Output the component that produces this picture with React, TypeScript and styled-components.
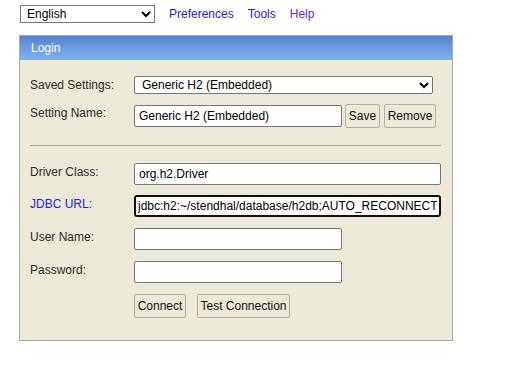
import React from 'react'
import styled, { createGlobalStyle } from 'styled-components'

const GlobalStyle = createGlobalStyle`
  html, body {
    margin: 0;
    padding: 0;
    background: #fff;
  }
  body {
    font-family: "Liberation Sans", Arial, sans-serif;
    font-size: 12px;
    color: #000;
  }
`

const Page = styled.div`
  padding: 5px 0 0 19px;
  width: 508px;
  height: 360px;
`

const TopBar = styled.div`
  display: flex;
  align-items: center;
  height: 18px;
  padding-left: 1px;
`

const LangSelect = styled.select`
  width: 135px;
  height: 18px;
  font-family: "Liberation Sans", Arial, sans-serif;
  font-size: 12px;
  border: 1px solid #767676;
  border-radius: 0;
  background: #fff;
  color: #000;
  padding: 0 0 0 2px;
  margin: 0 14px 0 0;
`

const NavLink = styled.a<{ $visited?: boolean }>`
  color: ${(p) => (p.$visited ? '#6a1fd8' : '#1a1aee')};
  text-decoration: none;
  margin-right: 14px;
  font-size: 12px;
`

const Panel = styled.div`
  margin-top: 12px;
  width: 432px;
  border: 1px solid #aca899;
  background: #ece9d8;
`

const PanelHead = styled.div`
  height: 24px;
  display: flex;
  align-items: center;
  padding-left: 11px;
  color: #fff;
  font-size: 12px;
  background: linear-gradient(to bottom, #5582cb 0%, #6b9ce0 50%, #7db1ee 100%);
`

const PanelBody = styled.div`
  padding: 16px 10px 22px 10px;
  display: flex;
  flex-direction: column;
`

const Row = styled.div<{ $gap?: number }>`
  display: flex;
  align-items: flex-start;
  margin-top: ${(p) => p.$gap ?? 0}px;
`

const Label = styled.div<{ $accent?: boolean; $pad?: number }>`
  width: 104px;
  flex: none;
  padding-top: ${(p) => p.$pad ?? 2}px;
  color: ${(p) => (p.$accent ? '#2323e6' : '#2b2b2b')};
  font-size: 12px;
`

const FieldSelect = styled.select`
  width: 299px;
  height: 18px;
  font-family: "Liberation Sans", Arial, sans-serif;
  font-size: 12px;
  border: 1px solid #767676;
  border-radius: 2px;
  background: #fff;
  color: #000;
  padding: 0 0 0 3px;
  margin: 0;
`

const Field = styled.input<{ $w: number; $drop?: boolean; $focus?: boolean }>`
  box-sizing: border-box;
  width: ${(p) => p.$w}px;
  height: 22px;
  margin: ${(p) => (p.$drop ? '1px 0 0 0' : '0')};
  padding: 0 ${(p) => (p.$focus ? 2 : 4)}px;
  font-family: "Liberation Sans", Arial, sans-serif;
  font-size: 12px;
  color: #000;
  background: #fff;
  border: ${(p) => (p.$focus ? '2px solid #111' : '1px solid #767676')};
  border-radius: ${(p) => (p.$focus ? 3 : 2)}px;
  outline: none;
`

const Btn = styled.button<{ $w: number; $ml?: number }>`
  box-sizing: border-box;
  width: ${(p) => p.$w}px;
  height: 24px;
  margin-left: ${(p) => p.$ml ?? 0}px;
  padding: 0;
  font-family: "Liberation Sans", Arial, sans-serif;
  font-size: 12px;
  color: #111;
  background: #ece9d8;
  border: 1px solid #b2b0a4;
  border-radius: 2px;
`

const Rule = styled.div`
  height: 1px;
  width: 411px;
  background: #a9a79c;
  margin-top: 17px;
`

const Spacer = styled.div`
  width: 104px;
  flex: none;
`

const App: React.FC = () => {
  return (
    <Page>
      <GlobalStyle />
      <TopBar>
        <LangSelect defaultValue="en">
          <option value="en">English</option>
        </LangSelect>
        <NavLink href="#">Preferences</NavLink>
        <NavLink href="#">Tools</NavLink>
        <NavLink href="#" $visited>Help</NavLink>
      </TopBar>
      <Panel>
        <PanelHead>Login</PanelHead>
        <PanelBody>
          <Row>
            <Label $pad={2}>Saved Settings:</Label>
            <FieldSelect defaultValue="h2e">
              <option value="h2e">Generic H2 (Embedded)</option>
            </FieldSelect>
          </Row>
          <Row $gap={10}>
            <Label $pad={2}>Setting Name:</Label>
            <Field $w={208} $drop defaultValue="Generic H2 (Embedded)" />
            <Btn $w={35} $ml={3}>Save</Btn>
            <Btn $w={52} $ml={4}>Remove</Btn>
          </Row>
          <Rule />
          <Row $gap={17}>
            <Label>Driver Class:</Label>
            <Field $w={307} defaultValue="org.h2.Driver" />
          </Row>
          <Row $gap={10}>
            <Label $accent>JDBC URL:</Label>
            <Field $w={307} $focus defaultValue="jdbc:h2:~/stendhal/database/h2db;AUTO_RECONNECT=TRUE" />
          </Row>
          <Row $gap={11}>
            <Label>User Name:</Label>
            <Field $w={208} defaultValue="" />
          </Row>
          <Row $gap={11}>
            <Label>Password:</Label>
            <Field $w={208} type="password" defaultValue="" />
          </Row>
          <Row $gap={11}>
            <Spacer />
            <Btn $w={52}>Connect</Btn>
            <Btn $w={93} $ml={11}>Test Connection</Btn>
          </Row>
        </PanelBody>
      </Panel>
    </Page>
  )
}

export default App
